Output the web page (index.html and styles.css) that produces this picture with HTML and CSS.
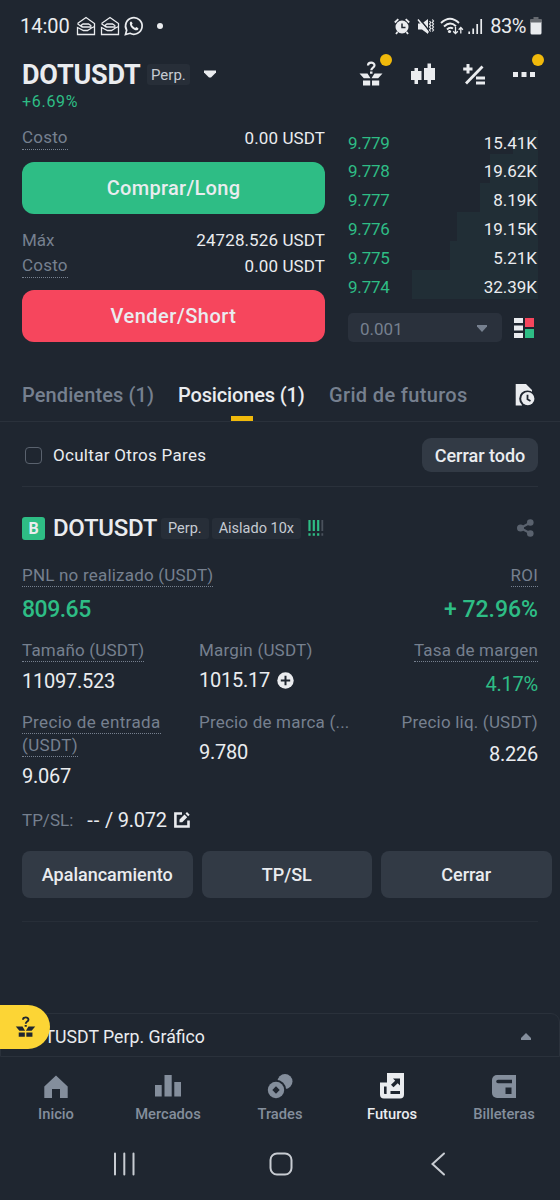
FILE: index.html
```html
<!DOCTYPE html>
<html lang="es">
<head>
<meta charset="UTF-8">
<meta name="viewport" content="width=device-width, initial-scale=1.0">
<title>DOTUSDT Perp.</title>
<link rel="stylesheet" href="styles.css">
</head>
<body>

<div class="screen">
    <svg width="0" height="0" class="defs">
        <symbol id="gift" viewBox="0 0 24 26">
            <path d="M9 4.500C9 .7 15.500.7 15.500 4.300C15.500 6.700 12.300 6.500 12.300 9.200" fill="none" stroke="currentColor" stroke-width="2.200"/>
            <path d="M11 10.500h2.500v2.300H11zM.5 12.500h8l3 4.800H4.800zM23.500 12.500h-8l-3 4.800h6.700zM4 19.500h7.200v5H4zM13 19.500h7.200v5H13z" fill="currentColor"/>
        </symbol>
        <symbol id="mail" viewBox="0 0 20 20">
            <path d="M1.500 7.500L10 1.500L18.500 7.500V18.500H1.500V11.500L7.500 14.500H11.500L14.800 12.500V9.500L12.500 8H7L5 9.300L6.500 11H14M1.500 7.800L6 11M18.500 10.500L14.500 12.500" fill="none" stroke="currentColor" stroke-width="1.300"/>
        </symbol>
    </svg>

    <div class="status">
        <span class="clock">14:00</span>
        <svg width="20" height="20"><use href="#mail"/></svg>
        <svg width="20" height="20"><use href="#mail"/></svg>
        <svg width="20" height="20" viewBox="0 0 20 20">
            <path d="M1.500 18.500L2.700 14.200A8.300 8.300 0 1 1 6 17.300Z" fill="none" stroke="currentColor" stroke-width="1.700"/>
            <path d="M6 6.200C7 4.800 7.700 5.300 8.600 7.600L7.900 8.800C8.600 10.200 9.700 11.300 11.100 12L12.300 11.100C14.500 12.100 15 12.600 14 13.700C11.500 16.300 4.600 10.500 6 6.200Z" fill="currentColor"/>
        </svg>
        <span class="status-dot"></span>
        <div class="status-right">
            <svg width="16" height="17" viewBox="0 0 16 17">
                <circle cx="8" cy="9" r="6.500" fill="currentColor"/>
                <path d="M.8 4.500L4.300 1.200M15.200 4.500L11.700 1.200M3.500 14L2 16M12.500 14L14 16" stroke="currentColor" stroke-width="1.800"/>
                <path d="M8 5.500V9.500H11.500" fill="none" stroke="#1f2630" stroke-width="1.500"/>
            </svg>
            <svg class="mute" width="17" height="17" viewBox="0 0 17 17">
                <path d="M1 5.500h4l6-4.500v15L5 11.500H1z" fill="currentColor"/>
                <path d="M2.300 .5L12.300 13" stroke="#1f2630" stroke-width="1.500"/>
                <path d="M1 1.500L11.500 14.500" stroke="currentColor" stroke-width="1.500"/>
                <path d="M12.500 3l1.200 1.500-1.200 1.500 1.200 1.500-1.200 1.500 1.200 1.500-1.200 1.500 1.200 1.500M15.300 1.500l1.200 1.500-1.200 1.500 1.200 1.500-1.200 1.500 1.200 1.500-1.200 1.500 1.200 1.500-1.200 1.500" fill="none" stroke="currentColor" stroke-width="1.200"/>
            </svg>
            <svg class="wifi" width="24" height="18" viewBox="0 0 24 18">
                <path d="M1 6Q10-2.500 19 6M4 9.500Q10 3.500 16 9.200M7 12.500Q10 9.500 13 11.500" fill="none" stroke="currentColor" stroke-width="1.900"/>
                <circle cx="9.500" cy="14.500" r="1.600" fill="currentColor"/>
                <path d="M15.500 10v6.500M13.200 14.300l2.300 2.300 2.300-2.300M20.800 16.500V10.500M18.700 12.700l2.100-2.200 2.100 2.200" fill="none" stroke="currentColor" stroke-width="1.300"/>
            </svg>
            <svg class="signal" width="15" height="17" viewBox="0 0 15 17">
                <path d="M1.200 13.500V16M5.200 10.500V16M9.200 6V16M13.200 1V16" stroke="currentColor" stroke-width="1.700"/>
            </svg>
            <span class="battery-text">83%</span>
            <svg width="12" height="18" viewBox="0 0 12 18">
                <path d="M3.500 0h5v2H11a1 1 0 0 1 1 1v3H0V3a1 1 0 0 1 1-1h2.500z" fill="#666a70"/>
                <path d="M.5 5.500h11V16a1.500 1.500 0 0 1-1.500 1.500H2A1.500 1.500 0 0 1 .5 16z" fill="currentColor"/>
            </svg>
        </div>
    </div>

    <header class="header">
        <div class="pair-row">
            <h1>DOTUSDT</h1>
            <span class="tag">Perp.</span>
            <svg width="12" height="8" viewBox="0 0 12 8"><path d="M0 .5h12v2L7 7.500H5L0 2.500z" fill="currentColor"/></svg>
        </div>
        <div class="change">+6.69%</div>
        <div class="tools">
            <span class="tool"><svg width="24" height="26"><use href="#gift"/></svg><i class="badge"></i></span>
            <span class="tool"><svg width="24" height="22" viewBox="0 0 24 22"><path d="M0 8h3.500V5H7v3h3.500v9H7v4H3.500v-4H0zM13 5h3.500V.5H20V5h4v12h-4v4h-3.500v-4H13z" fill="currentColor"/></svg></span>
            <span class="tool"><svg width="22" height="21" viewBox="0 0 22 21"><path d="M3.500 0h3v3.500H9.500v3h-3V9.500h-3v-3H.2v-3h3.300zM13 12.500h9v3h-9zM13 17.500h9v3h-9z" fill="currentColor"/><path d="M3 19.500L19.500 2.500" stroke="currentColor" stroke-width="2.800"/></svg></span>
            <span class="tool"><svg class="dots" width="22" height="5" viewBox="0 0 22 5"><path d="M0 0h5v5H0zM8.500 0h5v5h-5zM17 0h5v5h-5z" fill="currentColor"/></svg><i class="badge"></i></span>
        </div>
    </header>

    <section class="trade">
        <div class="order">
            <div class="order-row"><span class="hint">Costo</span><span class="amount">0.00 USDT</span></div>
            <button class="btn buy">Comprar/Long</button>
            <div class="order-row"><span class="plain">Máx</span><span class="amount">24728.526 USDT</span></div>
            <div class="order-row"><span class="hint">Costo</span><span class="amount">0.00 USDT</span></div>
            <button class="btn sell">Vender/Short</button>
        </div>
        <div class="book">
            <div class="depth">
                <div class="level first"><i class="bar" style="width: 25px"></i><span class="price">9.779</span><span>15.41K</span></div>
                <div class="level"><i class="bar" style="width: 48px"></i><span class="price">9.778</span><span>19.62K</span></div>
                <div class="level"><i class="bar" style="width: 58px"></i><span class="price">9.777</span><span>8.19K</span></div>
                <div class="level"><i class="bar" style="width: 81px"></i><span class="price">9.776</span><span>19.15K</span></div>
                <div class="level"><i class="bar" style="width: 88px"></i><span class="price">9.775</span><span>5.21K</span></div>
                <div class="level"><i class="bar" style="width: 126px"></i><span class="price">9.774</span><span>32.39K</span></div>
            </div>
            <div class="book-footer">
                <div class="select">0.001
                    <svg width="10" height="7" viewBox="0 0 10 7"><path d="M0 0h10v1.500L5 7 0 1.500z" fill="currentColor"/></svg>
                </div>
                <svg width="20" height="20" viewBox="0 0 20 20">
                    <path d="M0 0h9v5H0zM0 7.500h9v5H0zM0 15h9v5H0z" fill="#eaecef"/>
                    <path d="M11 0h9v9h-9z" fill="#f6465d"/>
                    <path d="M11 11h9v9h-9z" fill="#2ebd85"/>
                </svg>
            </div>
        </div>
    </section>

    <nav class="tabs">
        <span class="tab t1">Pendientes (1)</span>
        <span class="tab t2 active">Posiciones (1)</span>
        <span class="tab t3">Grid de futuros</span>
        <svg width="20" height="22" viewBox="0 0 20 22">
            <path d="M.7 0H11l6 6v6H7v9.500H.7z" fill="currentColor"/>
            <circle cx="12.500" cy="14.700" r="8.300" fill="#1f2630"/>
            <circle cx="12.800" cy="14.700" r="6.600" fill="currentColor"/>
            <path d="M12.500 10.800v4.500l3 1.700" fill="none" stroke="#1f2630" stroke-width="1.800"/>
        </svg>
    </nav>

    <div class="filter">
        <span class="checkbox"></span>
        <span class="filter-label">Ocultar Otros Pares</span>
        <button class="close-all">Cerrar todo</button>
    </div>

    <section class="position">
        <div class="position-head">
            <span class="side">B</span>
            <h2>DOTUSDT</h2>
            <span class="tag small perp">Perp.</span>
            <span class="tag small isolated">Aislado 10x</span>
            <svg width="16" height="16" viewBox="0 0 16 16">
                <path d="M1.500 0v11M5.800 0v11M10.200 0v11M1.500 13.300v2.400M5.800 13.300v2.400M10.200 13.300v2.400" stroke="#2ebd85" stroke-width="2.200"/>
                <path d="M14.300 0v11M14.300 13.300v2.400" stroke="#4a515c" stroke-width="1.800"/>
            </svg>
            <svg class="share" width="17" height="18" viewBox="0 0 17 18">
                <path d="M13.500 3.500L3.500 9L13.500 14.500" fill="none" stroke="currentColor" stroke-width="2"/>
                <circle cx="13.300" cy="3.500" r="3.300" fill="currentColor"/><circle cx="3.500" cy="9" r="3.500" fill="currentColor"/><circle cx="13.300" cy="14.500" r="3.300" fill="currentColor"/>
            </svg>
        </div>

        <div class="pnl">
            <div><div class="label"><span class="under">PNL no realizado (USDT)</span></div><div class="big profit">809.65</div></div>
            <div class="right"><div class="label"><span class="under">ROI</span></div><div class="big">+ 72.96%</div></div>
        </div>

        <div class="stats">
            <div><div class="label"><span class="under">Tamaño (USDT)</span></div><div class="value">11097.523</div></div>
            <div><div class="label">Margin (USDT)</div>
                <div class="value up">1015.17 <svg width="17" height="17" viewBox="0 0 17 17"><circle cx="8.500" cy="8.500" r="8.200" fill="currentColor"/><path d="M8.500 3.800v9.400M3.800 8.500h9.400" stroke="#1f2630" stroke-width="2"/></svg></div>
            </div>
            <div class="right"><div class="label"><span class="under">Tasa de margen</span></div><div class="value green low">4.17%</div></div>
        </div>

        <div class="stats prices">
            <div><div class="label entry"><span class="under">Precio de entrada<br>(USDT)</span></div><div class="value">9.067</div></div>
            <div><div class="label">Precio de marca (...</div><div class="value up">9.780</div></div>
            <div class="right"><div class="label">Precio liq. (USDT)</div><div class="value liq">8.226</div></div>
        </div>

        <div class="tpsl">
            <span class="label">TP/SL:</span>
            <span class="value"><span class="dashes">--</span> / 9.072</span>
            <svg width="16" height="16" viewBox="0 0 16 16">
                <path d="M8 1.500H1.400V14.500H14.500V8.500" fill="none" stroke="currentColor" stroke-width="2.600"/>
                <path d="M5.500 7.500L10.500 2.500L13.200 5.200L8.200 10.200H5.500zM11.500 1.500L13 0L15.700 2.700L14.200 4.200z" fill="currentColor"/>
            </svg>
        </div>

        <div class="actions">
            <button>Apalancamiento</button>
            <button>TP/SL</button>
            <button>Cerrar</button>
        </div>
    </section>

    <div class="chart-panel">
        <span>DOTUSDT Perp. Gráfico</span>
        <svg width="10" height="7" viewBox="0 0 10 7"><path d="M5 0L10 5v2H0V5z" fill="currentColor"/></svg>
        <div class="fab"><svg width="21" height="22"><use href="#gift"/></svg></div>
    </div>

    <nav class="bottom-nav">
        <div class="nav-item">
            <svg width="26" height="26" viewBox="0 0 26 26"><path d="M13 1.500L24.700 12.500V24H17v-9H9v9H1.300V12.500z" fill="currentColor"/></svg>
            <span>Inicio</span>
        </div>
        <div class="nav-item">
            <svg width="26" height="26" viewBox="0 0 26 26"><path d="M0 11h6.700v11.500H0zM9.500 1h7.200v21.500H9.500zM19.300 8H26v14.500h-6.700z" fill="currentColor"/></svg>
            <span>Mercados</span>
        </div>
        <div class="nav-item">
            <svg width="26" height="26" viewBox="0 0 26 26">
                <circle cx="18" cy="7.500" r="7.500" fill="currentColor"/>
                <circle cx="9" cy="16" r="10.200" fill="#1f2630"/>
                <circle cx="9" cy="16" r="8.200" fill="currentColor"/>
                <path d="M9 12.300l3.700 3.700L9 19.700 5.300 16z" fill="#1f2630"/>
            </svg>
            <span>Trades</span>
        </div>
        <div class="nav-item active">
            <svg width="26" height="26" viewBox="0 0 26 26">
                <path d="M8 -1h17v21.500a4 4 0 0 1-4 4H5a4 4 0 0 1-4-4V8.500h7z" fill="currentColor"/>
                <path d="M5 12.500h2.600v7.500H5.800a.8.8 0 0 1-.8-.8zM11.500 17h9.500v3h-9.500zM14 4.500h7v7l-2.300-2.300-4.200 4-2.500-2.500 4.200-4z" fill="#1f2630"/>
            </svg>
            <span>Futuros</span>
        </div>
        <div class="nav-item">
            <svg width="26" height="26" viewBox="0 0 26 26">
                <path d="M6 1h19v23H6a5 5 0 0 1-5-5V6a5 5 0 0 1 5-5z" fill="currentColor"/>
                <path d="M7 5.700h14v3.600H7a1.800 1.800 0 0 1 0-3.600zM14.500 13.500h6v6.500h-6z" fill="#1f2630"/>
            </svg>
            <span>Billeteras</span>
        </div>
    </nav>

    <div class="system-nav">
        <svg width="24" height="24" viewBox="0 0 24 24"><path d="M3 1.500v21M12.300 1.500v21M21.500 1.500v21" stroke="currentColor" stroke-width="2" stroke-linecap="round"/></svg>
        <svg width="24" height="24" viewBox="0 0 24 24"><rect x="1.500" y="1.500" width="21" height="21" rx="6.500" fill="none" stroke="currentColor" stroke-width="2"/></svg>
        <svg width="24" height="24" viewBox="0 0 24 24"><path d="M18 1.500L6.500 12L18 22.500" fill="none" stroke="currentColor" stroke-width="2" stroke-linecap="round"/></svg>
    </div>
</div>

</body>
</html>
```
FILE: styles.css
```css
* {
    box-sizing: border-box;
}

body {
    margin: 0;
    background-color: #1f2630;
    color: #eaecef;
    font-family: Roboto, "Liberation Sans", sans-serif;
    font-size: 17px;
}

svg {
    display: block;
    flex-shrink: 0;
    overflow: visible;
}

.defs {
    position: absolute;
}

button {
    border: none;
    padding: 0;
    color: #eaecef;
    font-family: inherit;
    font-weight: 500;
    cursor: pointer;
}

h1, h2 {
    margin: 0;
    font-weight: 500;
}

.screen {
    width: 560px;
    height: 1200px;
    overflow: hidden;
    display: flex;
    flex-direction: column;
}

/* status bar */
.status {
    height: 50px;
    padding: 2px 18px 0 20px;
    display: flex;
    align-items: center;
    gap: 4px;
}

.clock {
    font-size: 20px;
    width: 52px;
}

.status-dot {
    width: 6px;
    height: 6px;
    border-radius: 50%;
    background: #eaecef;
    margin-left: 9px;
}

.status-right {
    margin-left: auto;
    display: flex;
    align-items: center;
}

.mute {
    margin-left: 7px;
}

.wifi {
    margin-left: 6px;
}

.signal {
    margin-left: 4px;
}

.battery-text {
    font-size: 20px;
    letter-spacing: -0.5px;
    margin: 0 4px 0 7px;
}

/* header */
.header {
    height: 70px;
    padding: 0 22px;
    display: grid;
    grid-template-columns: 1fr auto;
    grid-template-rows: 48px 18px;
}

.pair-row {
    display: flex;
    align-items: center;
}

h1 {
    font-size: 27px;
    font-weight: 700;
    line-height: 32px;
    width: 118px;
    padding-top: 2px;
    letter-spacing: -0.2px;
}

.tag {
    height: 21px;
    padding: 0 4px;
    margin-right: 14px;
    margin-left: 7px;
    border-radius: 3px;
    background: #272e38;
    color: #c6cbd3;
    font-size: 15px;
    line-height: 22px;
}

.change {
    grid-row: 2;
    color: #2ebd85;
    font-size: 16px;
    line-height: 7px;
    letter-spacing: 0.7px;
}

.tools {
    grid-column: 2;
    grid-row: 1;
    display: flex;
    align-items: center;
    gap: 28px;
    padding-right: 3px;
}

.tool {
    position: relative;
}

.badge {
    position: absolute;
    top: -7px;
    right: -9px;
    width: 12px;
    height: 12px;
    border-radius: 50%;
    background: #f0b90b;
}

.dots + .badge {
    top: -18px;
}

/* order form and order book */
.trade {
    height: 248px;
    padding: 5px 22px 0;
    display: flex;
    justify-content: space-between;
}

.order {
    width: 303px;
}

.order-row {
    display: flex;
    justify-content: space-between;
    align-items: center;
    height: 26px;
}

.hint,
.plain {
    color: #76808f;
}

.hint {
    border-bottom: 1px dotted #76808f;
    line-height: 23px;
    letter-spacing: 0.2px;
}

.amount {
    letter-spacing: 0.1px;
}

.btn {
    display: block;
    width: 100%;
    height: 52px;
    margin: 11px 0 13px;
    border-radius: 12px;
    font-size: 20px;
    letter-spacing: 0.3px;
}

.buy {
    background: #2ebd85;
}

.sell {
    background: #f6465d;
    letter-spacing: 0.5px;
}

.book {
    width: 190px;
    padding-top: 5px;
}

.level {
    position: relative;
    display: flex;
    justify-content: space-between;
    height: 29px;
    padding: 6px 1px 0 0;
    line-height: 22px;
}

.level.first {
    height: 24px;
    padding-top: 2px;
}

.level span {
    position: relative;
}

.level .bar {
    position: absolute;
    top: 0;
    right: 0;
    bottom: 0;
    background: #212e36;
}

.level .price {
    color: #2ebd85;
    letter-spacing: -0.2px;
}

.book-footer {
    display: flex;
    align-items: center;
    justify-content: space-between;
    padding-right: 4px;
    margin-top: 14px;
}

.select {
    width: 154px;
    height: 29px;
    padding: 2px 15px 0 12px;
    border-radius: 5px;
    background: #2a313c;
    color: #76808f;
    display: flex;
    align-items: center;
    justify-content: space-between;
}

/* tabs */
.tabs {
    height: 54px;
    padding: 0 25px 0 22px;
    border-bottom: 1px solid #2a313b;
    display: flex;
    align-items: center;
    font-size: 20px;
    font-weight: 500;
    color: #76808f;
}

.tab {
    height: 54px;
    line-height: 54px;
    white-space: nowrap;
}

.t1 {
    width: 156px;
    letter-spacing: 0.1px;
}

.t2 {
    width: 127px;
    margin-right: 24px;
    letter-spacing: -0.15px;
}

.t3 {
    letter-spacing: 0.35px;
}

.tab.active {
    color: #eaecef;
    display: flex;
    flex-direction: column;
}

.tab.active::after {
    content: "";
    width: 22px;
    height: 5px;
    margin: -6px auto 0;
    background: #f0b90b;
}

.tabs svg {
    margin-left: auto;
    color: #eaecef;
}

/* filter row */
.filter {
    margin: 0 22px;
    height: 65px;
    padding: 2px 0 0 3px;
    border-bottom: 1px solid #2a313b;
    display: flex;
    align-items: center;
}

.checkbox {
    width: 17px;
    height: 17px;
    border: 1px solid #5a626e;
    border-radius: 4px;
    margin-right: 11px;
}

.filter-label {
    letter-spacing: 0.3px;
}

.close-all {
    width: 116px;
    height: 34px;
    margin-left: auto;
    border-radius: 9px;
    background: #323a45;
    font-size: 18px;
}

/* open position */
.position {
    margin: 0 22px;
    height: 435px;
    border-bottom: 1px solid #272e38;
}

.position-head {
    display: flex;
    align-items: center;
    height: 77px;
    padding-top: 5px;
}

.side {
    width: 23px;
    height: 23px;
    border-radius: 3px;
    background: #2ebd85;
    font-size: 16px;
    font-weight: 700;
    line-height: 24px;
    text-align: center;
    margin-right: 8px;
}

h2 {
    font-size: 24px;
    width: 104px;
    letter-spacing: -0.3px;
}

.tag.small {
    font-size: 14.5px;
    margin: 0 3px 0 4px;
    padding: 0 7px;
}

.tag.isolated {
    margin: 0 7px 0 0;
}

.share {
    margin-left: auto;
    margin-right: 4px;
    color: #5a626e;
}

.label {
    color: #76808f;
    line-height: 23px;
    letter-spacing: 0.2px;
}

.label.entry {
    letter-spacing: 0.35px;
}

.under {
    border-bottom: 1px dotted #76808f;
    padding-bottom: 1px;
}

.pnl {
    display: flex;
    justify-content: space-between;
    height: 75px;
}

.right {
    text-align: right;
}

.big {
    color: #2ebd85;
    font-size: 23px;
    font-weight: 500;
    line-height: 28px;
    margin-top: 9px;
}

.big.profit {
    letter-spacing: -0.5px;
}

.stats {
    display: grid;
    grid-template-columns: 177px 170px 1fr;
    height: 72px;
}

.stats.prices {
    height: 94px;
}

.value {
    font-size: 20px;
    line-height: 24px;
    margin-top: 7px;
    letter-spacing: -0.25px;
}

.value.up {
    margin-top: 6px;
    display: flex;
    align-items: center;
    gap: 7px;
}

.value.low {
    margin-top: 10px;
}

.value.liq {
    margin-top: 8px;
}

.green {
    color: #2ebd85;
}

.tpsl {
    display: flex;
    align-items: center;
    height: 30px;
}

.tpsl .label {
    letter-spacing: 0;
}

.tpsl .value {
    margin: 0 7px 0 14px;
}

.dashes {
    letter-spacing: 1px;
}

.actions {
    display: flex;
    gap: 9px;
    width: 530px;
    margin-top: 16px;
}

.actions button {
    width: 170.5px;
    height: 47px;
    border-radius: 8px;
    background: #323a45;
    font-size: 18px;
}

/* chart drawer */
.chart-panel {
    position: relative;
    height: 44px;
    margin-top: 91px;
    padding: 3px 28px 0 20px;
    border: 1px solid #2a313b;
    border-radius: 9px 9px 0 0;
    display: flex;
    align-items: center;
    justify-content: space-between;
    font-size: 17.7px;
}

.chart-panel > svg {
    color: #848e9c;
}

.fab {
    position: absolute;
    left: -1px;
    top: -9px;
    width: 50px;
    height: 44px;
    padding-left: 15px;
    border-radius: 0 22px 22px 0;
    background: #fcd535;
    color: #1f2630;
    display: flex;
    align-items: center;
}

/* bottom navigation */
.bottom-nav {
    display: flex;
    height: 76px;
    padding-top: 17px;
}

.nav-item {
    width: 112px;
    display: flex;
    flex-direction: column;
    align-items: center;
    gap: 5px;
    color: #848e9c;
    font-size: 14.7px;
    font-weight: 500;
    line-height: 18px;
}

.nav-item.active {
    color: #eaecef;
}

.system-nav {
    display: flex;
    justify-content: space-between;
    padding: 19px 110px 0 112px;
    color: #c8ccd2;
}
```
